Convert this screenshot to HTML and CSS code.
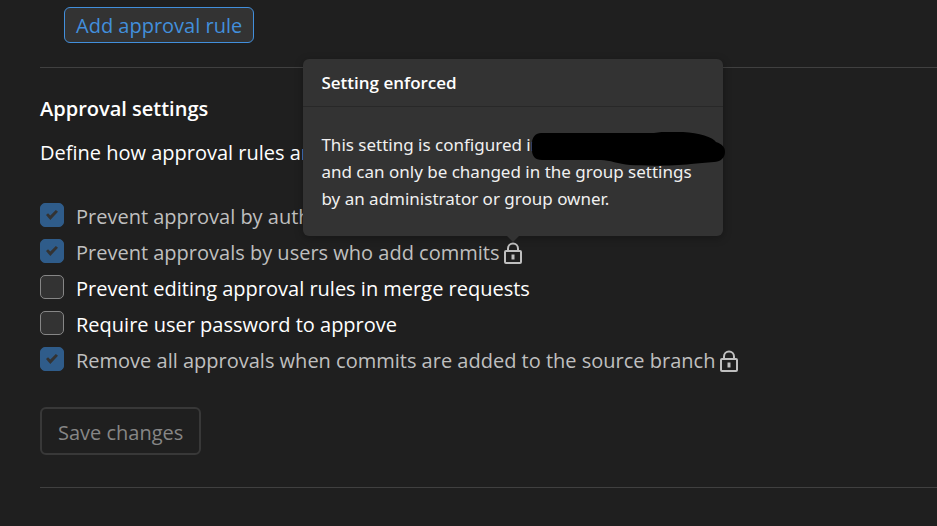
FILE: index.html
```html
<!DOCTYPE html>
<html lang="en">
<head>
    <meta charset="UTF-8">
    <meta name="viewport" content="width=device-width, initial-scale=1.0">
    <title>Merge request approvals</title>
    <link rel="stylesheet" href="styles.css">
</head>
<body>
    <main class="settings">
        <div class="rules">
            <button type="button" class="btn btn-confirm">Add approval rule</button>
        </div>

        <form class="approval-settings">
            <h2>Approval settings</h2>
            <p class="intro">Define how approval rules are applied.</p>

            <div class="option disabled">
                <input type="checkbox" id="author" checked disabled>
                <label for="author">Prevent approval by author</label>
            </div>
            <div class="option disabled">
                <input type="checkbox" id="committers" checked disabled>
                <label for="committers">Prevent approvals by users who add commits</label>
                <span class="lock">
                    <svg viewBox="0 0 20 22" width="20" height="22" fill="none" stroke="currentColor" stroke-width="2">
                        <rect x="2" y="9" width="16" height="12" rx="1"/>
                        <path d="M5 9V6.500a5 5 0 0 1 10 0V9"/>
                        <path d="M10 12.500v5" stroke-width="3"/>
                    </svg>
                    <div class="popover" role="tooltip">
                        <h3>Setting enforced</h3>
                        <div class="popover-body">
                            This setting is configured in
                            <svg class="redacted" viewBox="0 0 193 34" width="193" height="34">
                                <path d="M9 1H122C132-1 143 0 151 0C167 1 181 5 184 10C190 12 193 15 193 20C193 26 188 30 182 30C174 31 166 31 159 32C142 34 114 34 98 33C86 32 78 28 69 28H10C3 28 0 24 0 18V11C0 5 4 1 9 1Z"/>
                            </svg><br>
                            and can only be changed in the group settings by an administrator or group owner.
                        </div>
                    </div>
                </span>
            </div>
            <div class="option">
                <input type="checkbox" id="editing">
                <label for="editing">Prevent editing approval rules in merge requests</label>
            </div>
            <div class="option">
                <input type="checkbox" id="password">
                <label for="password">Require user password to approve</label>
            </div>
            <div class="option disabled">
                <input type="checkbox" id="remove" checked disabled>
                <label for="remove">Remove all approvals when commits are added to the source branch</label>
                <span class="lock">
                    <svg viewBox="0 0 20 22" width="20" height="22" fill="none" stroke="currentColor" stroke-width="2">
                        <rect x="2" y="9" width="16" height="12" rx="1"/>
                        <path d="M5 9V6.500a5 5 0 0 1 10 0V9"/>
                        <path d="M10 12.500v5" stroke-width="3"/>
                    </svg>
                </span>
            </div>

            <button type="submit" class="btn btn-save" disabled>Save changes</button>
        </form>
    </main>
</body>
</html>
```
FILE: styles.css
```css
* {
    box-sizing: border-box;
}
body {
    margin: 0;
    background-color: #1f1f1f;
    color: #fff;
    font-family: "Open Sans", "Noto Sans", sans-serif;
    font-size: 20px;
    line-height: 30px;
}
.settings {
    padding-left: 40px;
}
.rules {
    padding: 7px 24px 24px;
    border-bottom: 1px solid #404040;
}
.approval-settings {
    padding: 26px 0 32px;
    border-bottom: 1px solid #404040;
}
h2 {
    margin: 0 0 14px;
    font-size: 20px;
    font-weight: 600;
}
.intro {
    margin: 0 0 30px;
}
.btn {
    display: block;
    border-radius: 6px;
    font: inherit;
}
.btn-confirm {
    height: 36px;
    padding: 2px 11px 0;
    border: 1px solid #428fdc;
    background-color: #333;
    color: #428fdc;
}
.btn-save {
    height: 48px;
    margin-top: 29px;
    padding: 4px 16px 0;
    border: 2px solid #383838;
    background-color: #1f1f1f;
    color: #868686;
}
.option {
    display: flex;
    align-items: center;
    height: 36px;
}
.option input {
    appearance: none;
    flex: none;
    width: 24px;
    height: 24px;
    margin: 0 12px 2px 0;
    border: 1px solid #868686;
    border-radius: 5px;
    background-color: #333;
}
.option label {
    padding-top: 2px;
}
.option input:checked {
    display: grid;
    place-items: center;
    border-color: #2f5c8a;
    background-color: #2f5c8a;
}
.option input:checked::before {
    content: "";
    width: 12px;
    height: 10px;
    background-color: #333;
    clip-path: polygon(0 50%, 17% 32%, 36% 54%, 82% 0, 100% 18%, 36% 100%);
}
.disabled {
    color: #bfbfbf;
}
.lock {
    position: relative;
    display: flex;
    margin-left: 4px;
    padding-top: 2px;
}
.popover {
    position: absolute;
    bottom: 28px;
    left: 50%;
    width: 420px;
    transform: translateX(-50%);
    border-radius: 6px;
    background-color: #333;
    box-shadow: 0 2px 8px rgba(0, 0, 0, 0.3);
    color: #f0f0f0;
    font-size: 17px;
    line-height: 27px;
}
.popover::after {
    content: "";
    position: absolute;
    top: 100%;
    left: 50%;
    margin-left: -6px;
    border: 6px solid transparent;
    border-top-color: #333;
    border-bottom: 0;
}
.popover h3 {
    margin: 0;
    padding: 10px 18px;
    border-bottom: 1px solid #282828;
    color: #fff;
    font-size: 17px;
    font-weight: 600;
}
.popover-body {
    position: relative;
    padding: 24px 18px;
    font-family: "Noto Sans", "Open Sans", sans-serif;
}
.redacted {
    position: absolute;
    top: 25px;
    right: -2px;
}
```
